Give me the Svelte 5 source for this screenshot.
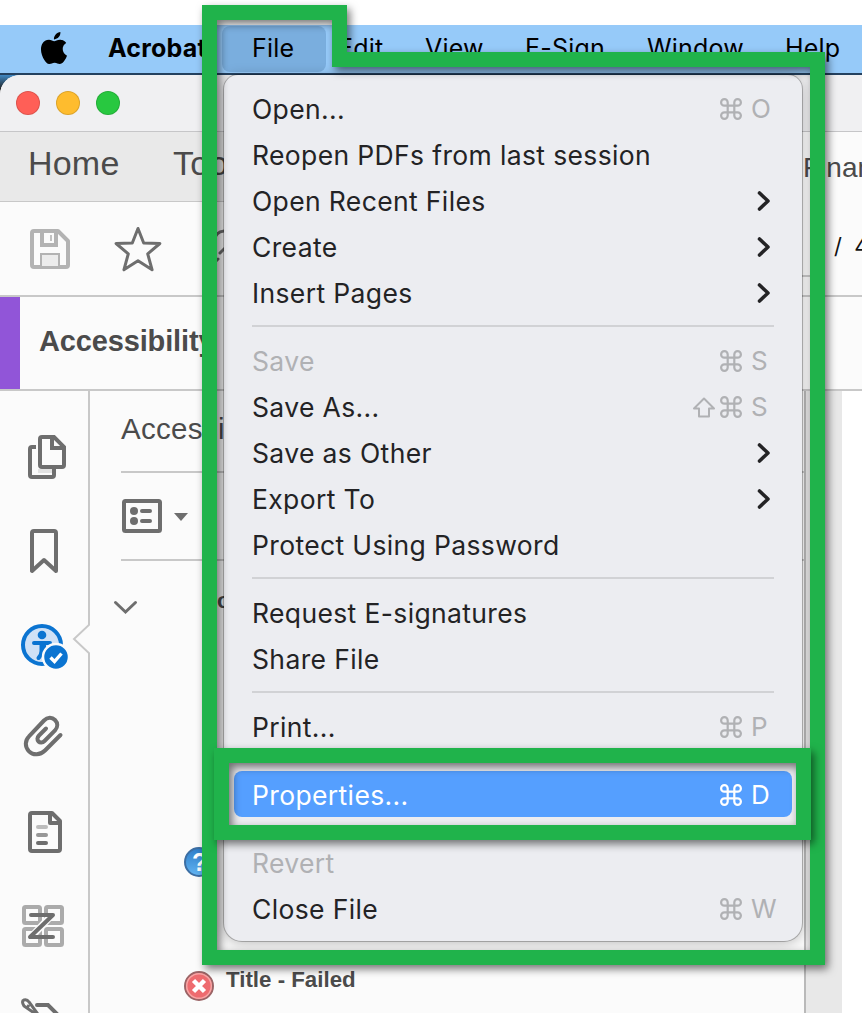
<script>
  const groups = [
    [
      { label: 'Open...', key: 'O' },
      { label: 'Reopen PDFs from last session' },
      { label: 'Open Recent Files', sub: true },
      { label: 'Create', sub: true },
      { label: 'Insert Pages', sub: true }
    ],
    [
      { label: 'Save', key: 'S', off: true },
      { label: 'Save As...', key: 'S', shift: true },
      { label: 'Save as Other', sub: true },
      { label: 'Export To', sub: true },
      { label: 'Protect Using Password' }
    ],
    [{ label: 'Request E-signatures' }, { label: 'Share File' }],
    [{ label: 'Print...', key: 'P' }],
    [{ label: 'Properties...', key: 'D', active: true }],
    [
      { label: 'Revert', off: true },
      { label: 'Close File', key: 'W' }
    ]
  ];
</script>

<div class="screen">
  <nav class="menubar">
    <svg class="apple" viewBox="0 0 24 24"><path d="M12.152 6.896c-.948 0-2.415-1.078-3.96-1.04-2.04.027-3.91 1.183-4.961 3.014-2.117 3.675-.546 9.103 1.519 12.09 1.013 1.454 2.208 3.09 3.792 3.039 1.52-.065 2.09-.987 3.935-.987 1.831 0 2.35.987 3.96.948 1.637-.026 2.676-1.48 3.676-2.948 1.156-1.688 1.636-3.325 1.662-3.415-.039-.013-3.182-1.221-3.22-4.857-.026-3.04 2.48-4.494 2.597-4.559-1.429-2.09-3.623-2.324-4.39-2.376-2-.156-3.675 1.09-4.61 1.09zM15.53 3.83c.843-1.012 1.4-2.427 1.245-3.83-1.207.052-2.662.805-3.532 1.818-.78.896-1.454 2.338-1.273 3.714 1.338.104 2.715-.688 3.559-1.701" /></svg>
    <span class="app">Acrobat</span>
    <span class="open">File</span>
    <span>Edit</span>
    <span>View</span>
    <span>E-Sign</span>
    <span>Window</span>
    <span>Help</span>
  </nav>

  <div class="desktop">
    <div class="window">
      <div class="titlebar"><i class="red"></i><i class="yellow"></i><i class="green"></i></div>
      <div class="upper">
        <div class="left">
          <div class="tabs"><span>Home</span><span>Tools</span></div>
          <div class="tools">
            <svg width="224" height="93" viewBox="0 202 224 93" fill="none">
              <path d="M34 231h24l10 10v24a2 2 0 0 1-2 2H34a2 2 0 0 1-2-2v-32a2 2 0 0 1 2-2z" stroke="#b3b3b3" stroke-width="4" stroke-linejoin="round" />
              <path d="M42 231v14h14v-14" stroke="#b3b3b3" stroke-width="4" />
              <path d="M51 235v6" stroke="#b3b3b3" stroke-width="1.6" />
              <path d="M41 266v-12h18v12" fill="#ececec" stroke="#b3b3b3" stroke-width="2" />
              <path d="M138 228.500l5.700 14.500 16.200.5-12.200 10.300 4.400 16-14.100-9-14.100 9 4.400-16-12.200-10.300 16.200-.5z" stroke="#6e6e6e" stroke-width="3" stroke-linejoin="round" />
              <path d="M214 241c1-6 5-10 12-10M226 247l-6 6M216 261l2-2" stroke="#6e6e6e" stroke-width="3" stroke-linecap="round" />
            </svg>
          </div>
        </div>
        <div class="doc">
          <span class="name">Finan</span>
          <div class="field"></div>
          <span class="count">/&nbsp; 4</span>
        </div>
      </div>
      <div class="heading"><b></b><span>Accessibility</span></div>

      <div class="body">
        <aside>
          <svg viewBox="0 410 88 94">
            <path d="M36 447h-4a2 2 0 0 0-2 2v26a2 2 0 0 0 2 2h20a2 2 0 0 0 2-2v-6" />
            <path d="M38 471h14" stroke="#e2e2e2" />
            <path d="M42 437h12l10 10v18a2 2 0 0 1-2 2H42a2 2 0 0 1-2-2v-26a2 2 0 0 1 2-2zM52 437v11h12" fill="#fbfbfb" />
          </svg>
          <svg viewBox="0 504 88 94"><path d="M32 571v-38a2 2 0 0 1 2-2h20a2 2 0 0 1 2 2v38l-12-11z" stroke-linejoin="round" /></svg>
          <svg viewBox="0 598 88 94">
            <circle cx="42" cy="645" r="19" fill="#cfe1f6" stroke="#0b74d1" />
            <circle cx="42" cy="635" r="4.300" fill="#0b74d1" stroke="none" />
            <path d="M34 643h16M41.500 644v7q0 4-3 7M44 644v6" stroke="#0b74d1" stroke-linecap="round" />
            <circle cx="56" cy="657" r="13" fill="#0b74d1" stroke="#fbfbfb" stroke-width="2.500" />
            <path d="M50.500 657.500l4 4 7-8" stroke="#fff" stroke-width="3.400" />
          </svg>
          <svg viewBox="0 692 88 94"><path d="M60.500 735L45 750.500c-5 5-12 5-16 .8-4.500-4.500-4-11 0-15L44 720.500c3.500-3.500 8-3.500 11-.5s3 7 0 10.500L44.500 741c-2 2-4.500 2-6 .5s-1.500-4 .5-6l7-7" stroke-linecap="round" /></svg>
          <svg viewBox="0 786 88 94">
            <path d="M32 813h20l8 8v28a2 2 0 0 1-2 2H32a2 2 0 0 1-2-2v-34a2 2 0 0 1 2-2zM50 813v10h10" stroke-linejoin="round" />
            <path d="M38 827h8" stroke="#bdbdbd" stroke-linecap="round" /><path d="M38 835h8" stroke="#969696" stroke-linecap="round" /><path d="M38 843h8" stroke-linecap="round" />
          </svg>
          <svg viewBox="0 880 88 94">
            <g stroke="#ababab"><rect x="24" y="907" width="16" height="16" rx="1.500" /><rect x="46" y="907" width="16" height="16" rx="1.500" /><rect x="24" y="929" width="16" height="16" rx="1.500" /><rect x="46" y="929" width="16" height="16" rx="1.500" /></g>
            <path d="M50 917L33 935" stroke="#fbfbfb" stroke-width="7" />
            <path d="M31 915h22L30 937h23" stroke-linecap="round" stroke-linejoin="round" />
          </svg>
          <svg viewBox="0 974 88 94">
            <path d="M40 1017l-16-11q-3-5 0-6t5 2l11 15M29 1005l-2 3" stroke-width="3" />
            <path d="M37 1005h11l12 12" stroke-linecap="round" />
          </svg>
          <svg class="notch" viewBox="0 0 18 34"><path d="M18 0v2L2 17l16 15v2" fill="#fbfbfb" stroke="#c8c8c8" stroke-width="2" /></svg>
        </aside>
        <main>
          <h2>Accessi</h2>
          <div class="options">
            <svg width="70" height="36" viewBox="121 498 70 36">
              <rect x="124" y="501" width="36" height="30" rx="1.500" fill="none" stroke="#6e6e6e" stroke-width="4" />
              <circle cx="134" cy="511" r="4" /><circle cx="134" cy="521" r="4" />
              <path d="M142 511h8M142 521h8" stroke="#6e6e6e" stroke-width="4" stroke-linecap="round" />
              <path d="M174 513h14l-7 8z" />
            </svg>
          </div>
          <div class="tree">
            <svg width="26" height="16" viewBox="112 599 26 16"><path d="M115.500 602.500l10 9.500 10-9.500" fill="none" stroke="#6e6e6e" stroke-width="3" stroke-linecap="round" /></svg>
            <span>Do</span>
          </div>
          <div class="result ask">
            <svg width="32" height="32" viewBox="0 0 32 32">
              <defs><linearGradient id="ask" x2="0" y2="1"><stop stop-color="#2d7dc9" /><stop offset="1" stop-color="#63b5f3" /></linearGradient></defs>
              <circle cx="16" cy="16" r="14" fill="url(#ask)" stroke="#3c6ea3" stroke-width="2" />
            </svg><b>?</b>
          </div>
          <div class="result">
            <svg width="32" height="32" viewBox="0 0 32 32">
              <circle cx="16" cy="16" r="14" fill="#ee6b6f" stroke="#9b6466" stroke-width="2" />
              <circle cx="16" cy="16" r="12.300" fill="none" stroke="#f6a5a5" stroke-width="1.500" />
              <path d="M10.500 10.500l11 11M21.500 10.500l-11 11" stroke="#fff" stroke-width="4.500" />
            </svg><span>Title - Failed</span>
          </div>
        </main>
        <div class="gutter"></div>
        <div class="page"></div>
      </div>
    </div>
  </div>

  <div class="menu">
    {#each groups as group, i}
      {#if i}<hr />{/if}
      {#each group as item}
        <div class="row" class:off={item.off} class:active={item.active}>
          <span>{item.label}</span>
          {#if item.sub}
            <svg class="sub" viewBox="0 0 14 20"><path d="M2.500 2l8.500 8-8.500 8" /></svg>
          {:else if item.key}
            <div class="keys">
              {#if item.shift}<svg class="shift" viewBox="0 0 24 21"><path d="M12 1.500L22 11.500h-5v8H7v-8H2z" /></svg>{/if}
              <svg class="cmd" viewBox="2 2 20 20"><path d="M15 6v12a3 3 0 1 0 3-3H6a3 3 0 1 0 3 3V6a3 3 0 1 0-3 3h12a3 3 0 1 0-3-3" /></svg>
              <span>{item.key}</span>
            </div>
          {/if}
        </div>
      {/each}
    {/each}
  </div>

  <svg class="marks" viewBox="0 0 862 1013">
    <path d="M209.500 12.500h130v47h478v898h-608z" />
    <rect x="221.500" y="755.500" width="582" height="77" />
  </svg>
</div>

<style>
  .screen { position: relative; width: 862px; height: 1013px; padding-top: 25px; box-sizing: border-box; overflow: hidden; background: #fff; font-family: Inter, sans-serif; }
  .menubar { height: 48px; background: #96caf9; border-bottom: 2px solid #24415f; display: grid; grid-template-columns: 70px 114px 116px 87px 100px 122px 138px 77px; padding-left: 38px; width: 824px; align-items: center; font-size: 25px; line-height: 44px; color: #000; white-space: nowrap; letter-spacing: .2px; }
  .menubar span { height: 46px; }
  .apple { width: 32px; height: 32px; display: block; margin-top: -2px; }
  .app { font-weight: 700; }
  .open { width: 74px; padding-left: 30px; background: #7aaede; border-radius: 8px; }
  .desktop { background: linear-gradient(#3f88c4, #222 14px); }
  .window { height: 938px; background: #fbfbfb; border-top-left-radius: 20px; overflow: hidden; font-family: "Liberation Sans", sans-serif; color: #4b4b4b; display: flex; flex-direction: column; }
  .titlebar { height: 56px; flex: none; background: #f0f0f2; border-bottom: 1px solid #c6c6c8; display: flex; gap: 16px; align-items: center; padding-left: 16px; }
  .titlebar i { width: 24px; height: 24px; border-radius: 50%; box-sizing: border-box; border: 1px solid #0002; }
  .red { background: #ff5f57; }
  .yellow { background: #febc2e; }
  .green { background: #28c840; }
  .upper { height: 163px; flex: none; display: flex; border-bottom: 2px solid #c8c8c8; }
  .left { width: 780px; }
  .tabs { height: 70px; background: #e9e9e9; border-bottom: 1px solid #c8c8c8; display: grid; grid-template-columns: 145px 1fr; padding-left: 28px; align-items: center; font-size: 34px; line-height: 62px; padding-bottom: 7px; box-sizing: border-box; letter-spacing: .2px; }
  .tools { height: 93px; }
  .tools svg { display: block; }
  .doc { display: grid; grid-template-columns: 30px 1fr; grid-template-rows: 72px 73px; width: 82px; white-space: nowrap; align-items: center; }
  .name { grid-column: 1 / 3; padding-left: 23px; font-size: 28px; }
  .field { height: 71px; border-bottom: 2px solid #c8c8c8; }
  .count { padding-left: 24px; padding-top: 11px; font: 22px Inter, sans-serif; color: #111; }
  .heading { height: 92px; flex: none; display: flex; align-items: center; gap: 19px; border-bottom: 2px solid #c8c8c8; font-weight: 700; font-size: 29px; letter-spacing: -.15px; }
  .heading b { width: 20px; height: 92px; background: #9155d8; }
  .heading span { padding-bottom: 4px; }
  .body { flex: 1; display: flex; min-height: 0; }
  aside { position: relative; width: 88px; padding-top: 19px; border-right: 2px solid #c8c8c8; }
  aside > svg { display: block; width: 88px; height: 94px; fill: none; stroke: #6e6e6e; stroke-width: 4; }
  aside > .notch { position: absolute; right: -2px; top: 231px; width: 18px; height: 34px; stroke: none; }
  main { width: 714px; padding-left: 31px; box-sizing: border-box; }
  h2 { margin: 0; height: 80px; line-height: 76px; font-size: 29.500px; font-weight: 400; border-bottom: 2px solid #c8c8c8; letter-spacing: .3px; }
  .options { height: 86px; border-bottom: 2px solid #c8c8c8; display: flex; align-items: center; fill: #6e6e6e; }
  .tree { height: 285px; display: flex; align-items: flex-start; padding-top: 38px; margin-left: -9px; box-sizing: border-box; font-weight: 700; font-size: 22px; }
  .tree span { margin: -11px 0 0 63px; }
  .result { height: 124px; display: flex; gap: 11px; padding-left: 62px; font-weight: 700; font-size: 22.300px; line-height: 20px; }
  .result svg { flex: none; }
  .ask b { color: #fff; font-size: 25px; line-height: 32px; margin-left: -34px; }
  .gutter { width: 36px; background: #e8e8e8; border-left: 2px solid #b9b9b9; }
  .page { flex: 1; background: #fff; }
  .menu { position: absolute; left: 224px; top: 75px; width: 578px; height: 866px; padding: 10px; box-sizing: border-box; background: #ecedf1; border-radius: 14px 14px 18px 18px; box-shadow: 0 0 0 1px #0000003d, 0 2px 14px #0004; font-size: 26.500px; color: #232325; letter-spacing: .36px; }
  .row { height: 46px; padding: 0 18px; display: flex; justify-content: space-between; align-items: center; border-radius: 8px; white-space: nowrap; }
  .row > span, .keys span { line-height: 44px; padding-top: 2px; }
  .off, .keys { color: #b0b1b4; }
  .active, .active .keys { color: #fff; }
  .active { background: #559fff; }
  hr { margin: 10px 18px; height: 2px; border: 0; background: #d1d2d5; }
  .row svg { position: relative; top: 1px; fill: none; stroke: currentColor; stroke-width: 2; }
  .row .sub { width: 14px; height: 20px; margin-right: 3px; stroke-width: 3.600; stroke-linecap: round; stroke-linejoin: round; }
  .keys { display: flex; align-items: center; }
  .keys span { width: 23px; margin-left: 9px; font-size: 26px; }
  .cmd { width: 22px; height: 22px; }
  .shift { width: 24px; height: 21px; margin-right: 4px; stroke-linejoin: round; }
  .marks { position: absolute; inset: 0; width: 862px; height: 1013px; fill: none; stroke: #20b34b; stroke-width: 15; }
  .marks > * { filter: drop-shadow(3px 4px 4px #0008); }
</style>
